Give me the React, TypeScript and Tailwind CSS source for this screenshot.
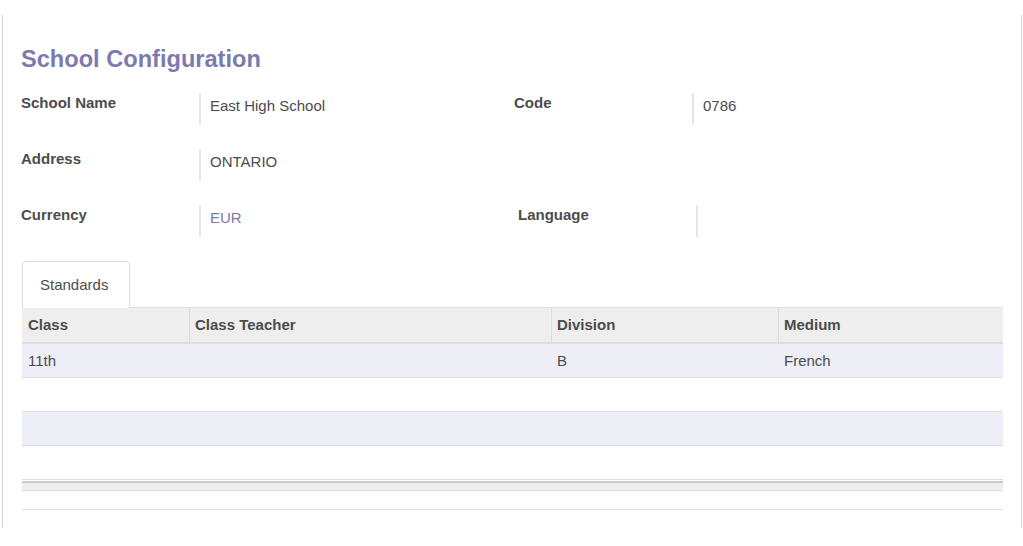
const FIELDS = [
  { label: 'School Name', value: 'East High School', label2: 'Code', value2: '0786' },
  { label: 'Address', value: 'ONTARIO' },
  { label: 'Currency', value: 'EUR', link: true, label2: 'Language', value2: '', shift: true },
] as const

const COLS = [
  { name: 'Class', w: 'w-[167px]' },
  { name: 'Class Teacher', w: 'w-[362px]' },
  { name: 'Division', w: 'w-[227px]' },
  { name: 'Medium', w: 'flex-1' },
]

const ROWS = [
  ['11th', '', 'B', 'French'],
  null,
  null,
  null,
]

function Field({ label, value, link, shift }: { label: string; value: string; link?: boolean; shift?: boolean }) {
  return (
    <div className={`flex h-8 ${shift ? 'pl-1' : ''}`}>
      <div className="w-[178px] shrink-0 pt-[1px] font-bold text-[#4c4c4c]">{label}</div>
      <div className={`flex-1 border-l-2 border-[#e6e6e6] pl-[9px] pt-[4px] ${link ? 'text-[#7c7bad]' : 'text-[#4c4c4c]'}`}>
        {value}
      </div>
    </div>
  )
}

export default function App() {
  return (
    <div className="h-[546px] bg-white pt-[15px] text-[15px] leading-[18px]" style={{ fontFamily: '"Liberation Sans", Arial, sans-serif' }}>
      <div className="ml-[2px] h-[513px] w-[1020px] border-x border-[#d6d6e2] pl-[18px] pr-[18px] pt-[30px]">
        <h1 className="text-[23.6px] font-bold leading-[28px] text-[#7c7bad]">School Configuration</h1>

        <div className="mt-[20px] flex flex-col gap-6">
          {FIELDS.map((f) => (
            <div key={f.label} className="grid grid-cols-[493px_1fr]">
              <Field label={f.label} value={f.value} link={'link' in f ? f.link : false} />
              {'label2' in f ? <Field label={f.label2} value={f.value2} shift={'shift' in f} /> : <div />}
            </div>
          ))}
        </div>

        <div className="ml-[1px] mt-[24px]">
          <div className="flex">
            <div className="-mb-px h-[47px] w-[108px] rounded-t-[4px] border border-b-0 border-[#dddddd] bg-white pl-[17px] pt-[14px] text-[#4c4c4c]">
              Standards
            </div>
          </div>

          <div className="border-t border-[#dddddd]">
            <div className="flex h-[36px] border-b-2 border-[#dddddd] bg-[#eeeeee] font-bold text-[#4c4c4c]">
              {COLS.map((c, i) => (
                <div key={c.name} className={`${c.w} flex items-center ${i > 0 ? 'border-l border-[#dddddd] pl-[5px]' : 'pl-[6px]'}`}>
                  {c.name}
                </div>
              ))}
            </div>
            {ROWS.map((r, ri) => (
              <div key={ri} className={`flex h-[34px] border-b border-[#dddddd] text-[#4c4c4c] ${ri % 2 === 0 ? 'bg-[#eeeef6]' : 'bg-white'}`}>
                {COLS.map((c, ci) => (
                  <div key={c.name} className={`${c.w} flex items-center ${ci > 0 ? 'pl-[6px]' : 'pl-[6px]'}`}>
                    {r ? r[ci] : ''}
                  </div>
                ))}
              </div>
            ))}
            <div className="mt-px h-[10px] border-t-2 border-b border-t-[#cccccc] border-b-[#dddddd] bg-[#eeeeee]" />
            <div className="h-[19px] border-b border-[#e2e2e2]" />
          </div>
        </div>
      </div>
    </div>
  )
}
